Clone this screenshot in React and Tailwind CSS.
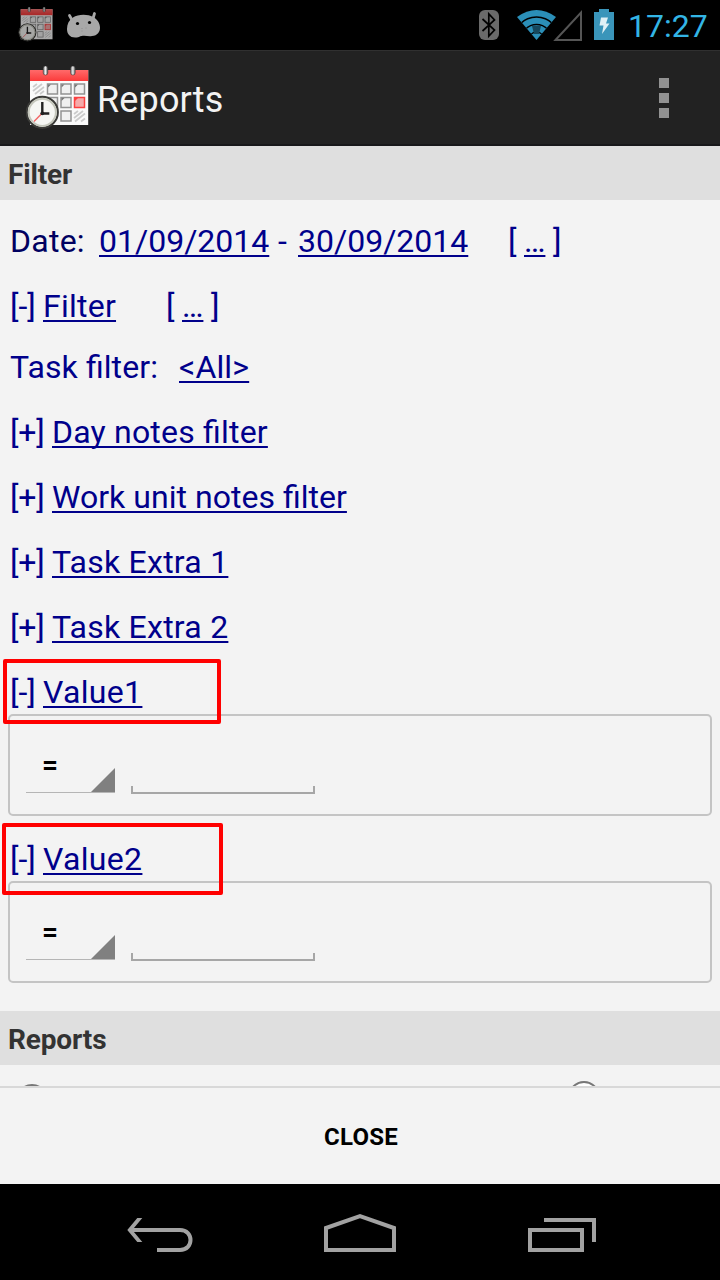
import React from "react";

function CalendarIcon({ className, dim = false }) {
  return (
    <svg viewBox="0 0 64 64" className={className} opacity={dim ? 0.68 : 1}>
      <defs>
        <linearGradient id="redBar" x1="0" y1="0" x2="0" y2="1">
          <stop offset="0" stopColor="#ff6a6a" />
          <stop offset="1" stopColor="#fb3b3b" />
        </linearGradient>
        <linearGradient id="ring" x1="0" y1="0" x2="1" y2="0">
          <stop offset="0" stopColor="#777" />
          <stop offset="0.5" stopColor="#eee" />
          <stop offset="1" stopColor="#555" />
        </linearGradient>
      </defs>
      <rect x="4" y="4" width="58.2" height="55" fill="#fafafa" />
      <rect x="4" y="4" width="58.2" height="11" fill="url(#redBar)" />
      <rect x="17.2" y="0" width="4.6" height="9" rx="2.2" fill="url(#ring)" stroke="#333" strokeWidth="0.5" />
      <rect x="44.6" y="0" width="4.6" height="9" rx="2.2" fill="url(#ring)" stroke="#333" strokeWidth="0.5" />
      <path d="M7 21l4-3M7 25l9-7M9 28l9-7M14 28l4-3" stroke="#ccc" strokeWidth="1.8" />
      <g fill="#f0f0f0" stroke="#929292" strokeWidth="1.5">
        <rect x="21.5" y="18" width="10" height="10" />
        <rect x="35" y="18" width="10" height="10" />
        <rect x="48.5" y="18" width="10" height="10" />
        <rect x="21.5" y="31.5" width="10" height="10" />
        <rect x="35" y="31.5" width="10" height="10" />
        <rect x="35" y="45" width="10" height="10" />
      </g>
      <path d="M22 21.5v-3h3zM35.5 21.5v-3h3zM49 21.5v-3h3zM35.5 35v-3h3z" fill="#777" />
      <rect x="48.5" y="31.5" width="10" height="10" fill="#f5aaaa" stroke="#fb4040" strokeWidth="1.5" />
      <path d="M49 35v-3h3z" fill="#fb4040" />
      <path d="M48 48l4-3M48 52l9-7M49 55.5l10-8M55 55.5l4-3" stroke="#ccc" strokeWidth="1.8" />
      <circle cx="16.3" cy="46.3" r="15.6" fill="#e9ebe4" stroke="#3b3b38" strokeWidth="2" />
      <circle cx="16.3" cy="46.3" r="13.5" fill="#f5f6f3" stroke="#c4c6bb" strokeWidth="1.8" />
      <path d="M16.3 47L8 55.5" stroke="#f26565" strokeWidth="1.4" />
      <path d="M16.3 36v11.5h7" fill="none" stroke="#222" strokeWidth="2.4" />
      <circle cx="16.3" cy="47.3" r="1.9" fill="#222" />
    </svg>
  );
}

function StatusBar() {
  return (
    <div className="flex h-[50px] shrink-0 items-start bg-black">
      <CalendarIcon dim className="mt-[7px] ml-[18px] h-[35px] w-[36px]" />
      <svg viewBox="0 0 36 28" className="mt-[11px] ml-[12px] h-[28px] w-[36px]" fill="#a8a8a8">
        <path d="M3.5 4.5L6 9M28.5 2.5l-1.5 5" stroke="#a8a8a8" strokeWidth="2.8" strokeLinecap="round" />
        <path d="M7 6.500C12 3 22 3 27 6C36 10 37 24 26 25C22 26 18 23.500 13 26C5 28 1 24 1 18C1 13 3 9 7 6.500Z" />
        <circle cx="11.5" cy="12.5" r="1.6" fill="#000" />
        <circle cx="23.5" cy="11.5" r="1.6" fill="#000" />
        <path d="M15.5 17.5h1M19.5 17h1M15.5 20h1" stroke="#888" strokeWidth="0.8" />
      </svg>
      <svg viewBox="0 0 20 30" className="mt-[10px] ml-[377px] h-[30px] w-[20px]">
        <rect width="20" height="30" rx="6" fill="#6a6a6a" />
        <path d="M3.5 9L15.5 20L9.8 26V4L15.5 10L3.5 21" fill="none" stroke="#000" strokeWidth="1.7" />
      </svg>
      <svg viewBox="0 0 66 33" className="mt-[9px] ml-[18px] h-[33px] w-[66px]">
        <clipPath id="fan"><path d="M0 8Q19.500 -6 39 8L19.500 31Z" /></clipPath>
        <g clipPath="url(#fan)">
          <circle cx="19.5" cy="31" r="31" fill="#2b8fb8" />
          <g fill="none" stroke="#000" strokeWidth="1.3">
            <circle cx="19.5" cy="31" r="23" />
            <circle cx="19.5" cy="31" r="15.5" />
            <circle cx="19.5" cy="31" r="8" />
          </g>
          <path d="M15 17h9l-2 8h-5z" fill="#16485d" />
        </g>
        <path d="M38.5 31L64 3.5V31Z" fill="none" stroke="#555" strokeWidth="2" />
      </svg>
      <svg viewBox="0 0 20 31" className="mt-[9px] ml-[11px] h-[31px] w-[20px]">
        <path d="M5 0h10v3h5v28H0V3h5z" fill="#3a95ba" />
        <path d="M7 8.5h7l-2 6h3.5L8 25l1.5-8.500H5.5z" fill="#e0f0f5" />
      </svg>
      <span className="ml-[14px] w-[88px] text-[32px] leading-[53px] whitespace-nowrap text-[#33b5e5]">17:27</span>
    </div>
  );
}

function ActionBar() {
  return (
    <div className="flex h-24 shrink-0 items-start border-t border-b-2 border-t-[#303030] border-b-[#18181a] bg-[#222222]">
      <CalendarIcon className="mt-[15px] ml-[26px] h-[64px] w-[64px]" />
      <h1 className="ml-[7px] text-[36px] leading-[98px] font-normal tracking-[0.15px] text-[#f3f3f3]">Reports</h1>
      <div className="mt-[27px] mr-[51px] ml-auto flex flex-col gap-[5px]">
        <i className="size-[10px] bg-[#929292]" />
        <i className="size-[10px] bg-[#929292]" />
        <i className="size-[10px] bg-[#929292]" />
      </div>
    </div>
  );
}

function SectionHeader({ children }) {
  return (
    <h2 className="h-[54px] shrink-0 bg-[#dfdfdf] pl-2 text-[28px] leading-[57px] font-bold tracking-[-0.15px] text-[#333333]">
      {children}
    </h2>
  );
}

function Link({ className = "", children }) {
  return (
    <a className={`underline decoration-2 underline-offset-[3px] [font-feature-settings:'liga'_1] [text-decoration-skip-ink:none] ${className}`}>
      {children}
    </a>
  );
}

function Toggle({ className, children }) {
  return (
    <div className="flex h-[65px] shrink-0">
      <span className="w-[42px] tracking-[-0.2px]">[+]</span>
      <Link className={className}>{children}</Link>
    </div>
  );
}

function Ellipsis() {
  return (
    <>
      <span className="w-[16px]">[</span>
      <Link className="w-[21px]">…</Link>
      <span className="pl-[8px]">]</span>
    </>
  );
}

function ValueFilter({ label, mark }) {
  return (
    <div className="relative h-[156px] shrink-0">
      <div className="flex h-[54px] pl-[10px]">
        <span className="w-[33px]">[-]</span>
        <Link className="tracking-[0.33px]">{label}</Link>
      </div>
      <div className="mx-2 flex h-[102px] items-end rounded-[5px] border-2 border-[#c4c4c4] pb-[20px] pl-4">
        <div className="mb-px flex h-[48px] w-[89px] items-end justify-between border-b border-[#b5b5b5] pl-[16px]">
          <b className="self-start text-[28px] leading-[40px] text-black">=</b>
          <svg viewBox="0 0 24 24" className="size-6">
            <path d="M24 0V24H0Z" fill="#808080" />
          </svg>
        </div>
        <div className="ml-4 h-[8px] w-[184px] border-x-2 border-b-2 border-[#a6a6a6]" />
      </div>
      <div className={`absolute rounded-[2px] border-4 border-[#ff0000] ${mark}`} />
    </div>
  );
}

export default function App() {
  return (
    <div className="flex h-[1280px] w-[720px] flex-col overflow-hidden bg-[#f3f3f3] font-[Roboto,sans-serif]">
      <StatusBar />
      <ActionBar />
      <SectionHeader>Filter</SectionHeader>
      <main className="flex h-[811px] shrink-0 flex-col pt-[9px] text-[32px] leading-[65px] whitespace-pre text-[#00008b]">
        <div className="flex h-[65px] shrink-0 pl-[10px]">
          <span className="w-[89px] tracking-[0.25px] text-[#000060]">Date:</span>
          <Link className="w-[170px]">01/09/2014</Link>
          <span className="w-[29px] pl-[9px]">-</span>
          <Link className="w-[170px]">30/09/2014</Link>
          <span className="w-[40px]" />
          <Ellipsis />
        </div>
        <div className="flex h-[65px] shrink-0 pl-[10px]">
          <span className="w-[33px]">[-]</span>
          <span className="w-[123px]"><Link className="tracking-[0.25px]">Filter</Link></span>
          <Ellipsis />
        </div>
        <div className="flex h-[61px] shrink-0 pl-[10px] leading-[56px]">
          <span className="w-[169px] tracking-[0.1px] [font-feature-settings:'liga'_1]">Task filter:</span>
          <Link className="tracking-[0.15px]">{"<All>"}</Link>
        </div>
        <div className="shrink-0 pl-[10px]">
          <Toggle className="tracking-[0.2px]">Day notes filter</Toggle>
          <Toggle className="tracking-[0.03px]">Work unit notes filter</Toggle>
          <Toggle className="tracking-[0.24px]">Task Extra 1</Toggle>
          <Toggle className="tracking-[0.24px]">Task Extra 2</Toggle>
        </div>
        <ValueFilter label="Value1" mark="top-[-1px] left-[3px] h-[65px] w-[218px]" />
        <div className="h-[11px] shrink-0" />
        <ValueFilter label="Value2" mark="top-[-4px] left-[2px] h-[72px] w-[221px]" />
      </main>
      <SectionHeader>Reports</SectionHeader>
      <div className="flex h-[21px] shrink-0 overflow-hidden">
        <i className="mt-[19px] ml-[16px] size-8 shrink-0 rounded-full border-2 border-[#777777]" />
        <i className="mt-[16px] ml-[520px] size-8 shrink-0 rounded-full border-2 border-[#777777] bg-white" />
      </div>
      <button className="h-[98px] w-full shrink-0 border-t-2 border-[#d8d8d8] pt-px pl-[2px] text-[24px] leading-[97px] font-bold tracking-[0.2px] text-black">
        CLOSE
      </button>
      <nav className="flex h-24 shrink-0 items-start bg-black">
        <svg viewBox="0 0 68 40" className="mt-[30px] ml-[127px] h-[40px] w-[68px]" fill="none" stroke="#a2a2a2" strokeWidth="4">
          <path d="M10.300 4H15.300L5.300 16L15.300 28H10.300L0.300 16Z" fill="#a2a2a2" stroke="none" />
          <path d="M3 16H53C67 16 67 36 53 36H30" />
        </svg>
        <svg viewBox="0 0 72 40" className="mt-[30px] ml-[129px] h-[40px] w-[72px]" fill="none" stroke="#a2a2a2" strokeWidth="4">
          <path d="M2 36V14L36 2.200L70 14V36Z" />
        </svg>
        <svg viewBox="0 0 70 40" className="mt-[30px] ml-[132px] h-[40px] w-[70px]" fill="none" stroke="#a2a2a2" strokeWidth="4">
          <path d="M2 16H54V36H2ZM16 6H66V28" />
        </svg>
      </nav>
    </div>
  );
}
